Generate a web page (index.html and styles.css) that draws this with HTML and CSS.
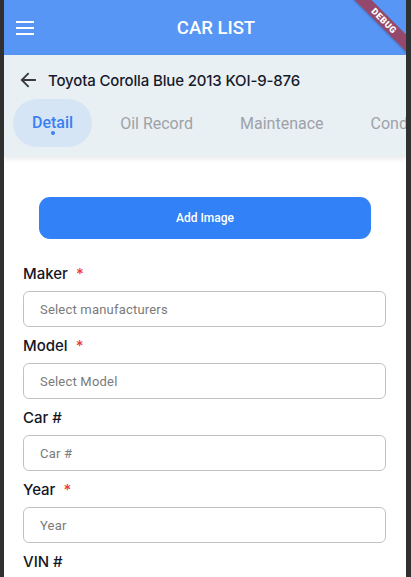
FILE: index.html
```html
<!DOCTYPE html>
<html lang="en">
<head>
<meta charset="utf-8">
<title>Car List</title>
<link rel="stylesheet" href="styles.css">
</head>
<body>
<div class="app">
  <header class="appbar">
    <button class="menu" aria-label="Menu">
      <span></span><span></span><span></span>
    </button>
    <h1 class="appbar-title">CAR LIST</h1>
  </header>
  <div class="debug">DEBUG</div>

  <section class="car-head">
    <div class="car-title-row">
      <svg class="back" width="16" height="16" viewBox="0 0 16 16" aria-hidden="true">
        <path d="M15 8H2.2M8 1.8 1.8 8 8 14.2" fill="none" stroke="#3a3a3a" stroke-width="1.8" stroke-linecap="square"/>
      </svg>
      <h2 class="car-title">Toyota Corolla Blue 2013 KOI-9-876</h2>
    </div>
    <nav class="tabs">
      <div class="tab active">Detail<span class="dot"></span></div>
      <div class="tab">Oil Record</div>
      <div class="tab">Maintenace</div>
      <div class="tab">Condition</div>
    </nav>
  </section>

  <main class="body">
    <button class="add-image">Add Image</button>
    <form class="form">
      <div class="field">
        <label class="label">Maker <span class="req">*</span></label>
        <div class="input">Select manufacturers</div>
      </div>
      <div class="field">
        <label class="label">Model <span class="req">*</span></label>
        <div class="input">Select Model</div>
      </div>
      <div class="field">
        <label class="label">Car #</label>
        <div class="input">Car #</div>
      </div>
      <div class="field">
        <label class="label">Year <span class="req">*</span></label>
        <div class="input">Year</div>
      </div>
      <div class="field">
        <label class="label">VIN #</label>
      </div>
    </form>
  </main>
</div>
</body>
</html>
```

FILE: styles.css
```css
* { box-sizing: border-box; }
html, body { margin: 0; padding: 0; }
body {
  background: #303030;
  height: 577px;
  overflow: hidden;
}
.app {
  position: relative;
  margin: 0 5px 0 4px;
  width: 402px;
  height: 577px;
  background: #ffffff;
  overflow: hidden;
  display: flex;
  flex-direction: column;
}
.appbar {
  height: 55px;
  flex: none;
  background: #5796f5;
  display: flex;
  align-items: center;
  padding-left: 12px;
}
.menu {
  width: 18px;
  height: 14px;
  padding: 0;
  border: 0;
  background: none;
  display: flex;
  flex-direction: column;
  justify-content: space-between;
  margin-top: 1px;
}
.menu span {
  display: block;
  height: 2px;
  width: 18px;
  background: #ffffff;
}
.appbar-title {
  flex: 1;
  margin: 0;
  padding-right: 8px;
  text-align: center;
  font-family: Roboto, "Liberation Sans", sans-serif;
  font-weight: 500;
  font-size: 18.5px;
  color: #ffffff;
}
.debug {
  position: absolute;
  left: 330px;
  top: 15px;
  width: 100px;
  height: 12px;
  line-height: 12px;
  transform: rotate(45deg);
  background: rgba(183, 28, 28, 0.63);
  color: #ffffff;
  font-family: Roboto, "Liberation Sans", sans-serif;
  font-weight: 900;
  font-size: 9px;
  letter-spacing: 0.6px;
  text-align: center;
  box-shadow: 0 1px 2px rgba(0,0,0,0.2);
}
.car-head {
  flex: none;
  background: #e9f0f4;
  box-shadow: 0 2px 5px rgba(0, 0, 0, 0.09);
  position: relative;
  z-index: 1;
  padding-bottom: 10px;
}
.car-title-row {
  height: 44px;
  padding: 6px 0 0 16px;
  display: flex;
  align-items: center;
}
.back { flex: none; }
.car-title {
  margin: 0 0 0 12px;
  font-family: Inter, "Noto Sans", sans-serif;
  font-weight: 500;
  font-size: 15px;
  letter-spacing: -0.15px;
  color: #161a2a;
  white-space: nowrap;
}
.tabs {
  display: flex;
  gap: 9px;
  padding-left: 9px;
  white-space: nowrap;
  overflow: hidden;
}
.tab {
  position: relative;
  flex: none;
  height: 48px;
  padding: 0 19px;
  border-radius: 24px;
  display: flex;
  align-items: center;
  font-family: Roboto, "Liberation Sans", sans-serif;
  font-size: 16px;
  color: #9da2a8;
}
.tab.active {
  background: #d6e5f5;
  color: #3a80f0;
  font-weight: 500;
  padding-bottom: 2px;
}
.dot {
  position: absolute;
  left: 50%;
  bottom: 12px;
  width: 4px;
  height: 4px;
  margin-left: -2px;
  border-radius: 50%;
  background: #3a80f0;
}
.body {
  flex: 1;
  padding: 40px 20px 0 19px;
}
.add-image {
  display: block;
  width: 332px;
  height: 42px;
  margin-left: 16px;
  border: 0;
  border-radius: 11px;
  background: #3381f6;
  color: #ffffff;
  font-family: Roboto, "Liberation Sans", sans-serif;
  font-weight: 500;
  font-size: 12px;
}
.form {
  display: flex;
  flex-direction: column;
  gap: 9px;
  margin-top: 25px;
}
.field {
  display: flex;
  flex-direction: column;
  gap: 7px;
}
.label {
  height: 20px;
  line-height: 20px;
  font-family: Inter, "Noto Sans", sans-serif;
  font-weight: 500;
  font-size: 15px;
  color: #121625;
}
.req {
  color: #ef3b3b;
  margin-left: 4px;
}
.input {
  height: 36px;
  border: 1px solid #c2c2c2;
  border-radius: 6px;
  padding-left: 16px;
  display: flex;
  align-items: center;
  font-family: Roboto, "Liberation Sans", sans-serif;
  font-size: 13px;
  letter-spacing: 0.2px;
  color: #7a7a7a;
}
```
